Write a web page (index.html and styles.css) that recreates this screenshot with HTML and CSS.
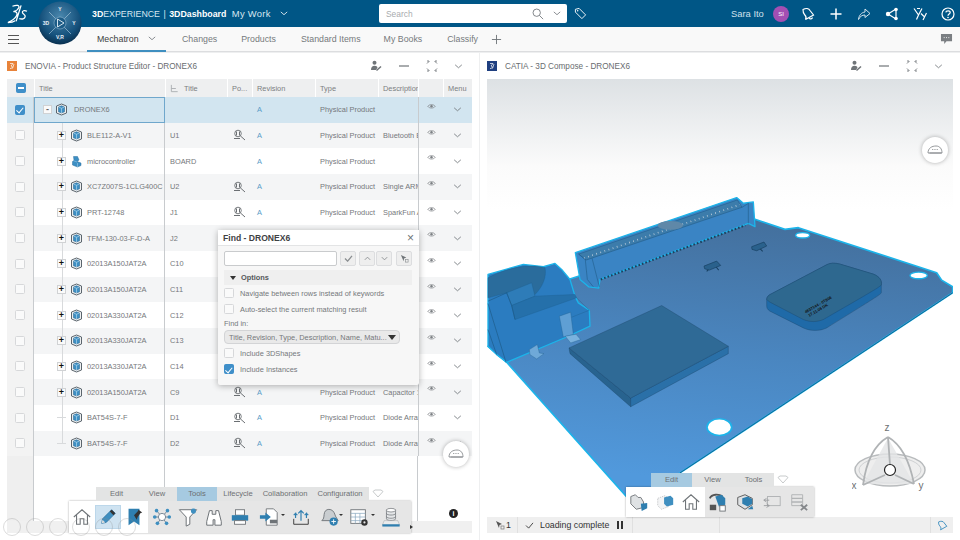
FILE: index.html
```html
<!DOCTYPE html>
<html>
<head>
    <title>3DDashboard</title>
    <link rel="stylesheet" href="styles.css">
</head>
<body>
    <svg class="defs" width="0" height="0">
        <symbol id="cube" viewBox="0 0 13 13">
            <path d="M1.500 3 6.500 1 11.500 3v7l-5 2-5-2z" fill="#eef0f1" stroke="#5b656d" stroke-width="1"/>
            <path d="M3.500 4 6.500 2.800 9.500 4v4.800L6.500 10 3.500 8.800z" fill="#3d8fc4" stroke="#1f5f8a" stroke-width=".5"/>
            <path d="M3.500 4 6.500 5.300 9.500 4M6.500 5.300V10" fill="none" stroke="#bfe0f2" stroke-width=".6"/>
        </symbol>
        <symbol id="part" viewBox="0 0 13 13">
            <path d="M3.500 1.500h4l1.500 3.500-2 1.500 4 1.500v2.500L7.500 12 2.500 10V6.500l1.500-1.200z" fill="#3d8fc4" stroke="#2a6f9e" stroke-width=".5"/>
            <path d="M3 5.500 7 7M7.500 12V8" fill="none" stroke="#a9d3ec" stroke-width=".5"/>
        </symbol>
        <symbol id="inst" viewBox="0 0 14 12">
            <circle cx="5" cy="4.500" r="3.300" fill="none" stroke="#6b6f73" stroke-width=".9"/>
            <path d="M3.500 2.500v4M6.500 2.500v4M7.500 7 12 11M1 9.500h6" fill="none" stroke="#6b6f73" stroke-width="1"/>
        </symbol>
        <symbol id="eye" viewBox="0 0 10 8">
            <path d="M.8 3.800C2.500 1.200 7.500 1.200 9.200 3.800 7.500 6.400 2.500 6.400.8 3.800z" fill="none" stroke="#7c8084" stroke-width=".8"/>
            <circle cx="5" cy="3.700" r="1.400" fill="#7c8084"/>
        </symbol>
        <symbol id="chev" viewBox="0 0 10 6">
            <path d="M1 1l4 3.500L9 1" fill="none" stroke="currentColor" stroke-width="1"/>
        </symbol>
        <symbol id="person" viewBox="0 0 12 12">
            <circle cx="4.500" cy="2.800" r="2" fill="#6f7478"/>
            <path d="M1 10c0-3 1.500-4.300 3.500-4.300S7 6.500 7.500 7.500L6 10z" fill="#6f7478"/>
            <path d="M6.500 10.500 11 6.500" stroke="#6f7478" stroke-width="1.500"/>
        </symbol>
        <symbol id="hub" viewBox="0 0 22 22">
            <path d="M11 11 5 4M11 11l6-7M11 11H3M11 11h8M11 11l-5 7M11 11l5 7" stroke="#6f8090" stroke-width="1"/>
            <circle cx="11" cy="11" r="4" fill="#fff" stroke="#6f8090" stroke-width="1"/>
            <g fill="#3f8fc0"><circle cx="5" cy="4" r="2"/><circle cx="17" cy="4" r="2"/><circle cx="3" cy="11" r="2"/><circle cx="19" cy="11" r="2"/><circle cx="6" cy="18" r="2"/><circle cx="16" cy="18" r="2"/></g>
        </symbol>
    </svg>

    <header class="topbar">
        <svg class="ds-logo" viewBox="0 0 24 22"><path d="M7 2.500C12 .5 15 1.500 14 4S10 8 8 8.500c3.500-.5 5 1.500 3.500 4.500-1.500 3-6 6-9.500 7.500 3.500 0 6-.5 8-2M16.500 1.500 11 19M23 8c-3-1.500-5.500-.5-5 1.500s3.500 2 3 4.500-3.500 3-6.500 2" fill="none" stroke="#fff" stroke-width="1.400"/></svg>
        <div class="brand"><b>3D</b>EXPERIENCE <span class="pipe">|</span> <b>3DDashboard</b> <span class="ctx">My Work</span></div>
        <svg class="brand-chev"><use href="#chev"/></svg>
        <div class="search">
            <span class="search-text">Search</span>
            <svg class="search-ico" viewBox="0 0 14 14"><circle cx="5.500" cy="5.500" r="4.300" fill="none" stroke="#6f7478"/><path d="M8.700 8.700 13 13" stroke="#6f7478"/></svg>
            <svg class="search-chev"><use href="#chev"/></svg>
        </div>
        <svg class="tag" viewBox="0 0 14 14"><path d="M1.500 2.500 5.500 1.500 12.500 8.500 8.500 12.500 1.500 5.500z" fill="none" stroke="#fff"/><circle cx="4" cy="4" r=".8" fill="#fff"/></svg>
        <div class="user">Sara Ito</div>
        <div class="avatar">SI</div>
        <svg class="act" viewBox="0 0 14 14"><path d="M2 2.500C5 1 8 1.500 9 3.500L12.500 8 4.500 12.500C5.500 11 5 9 3.500 7.500 2 6 2 4 2 2.500zM8 11c1 1.500 3 1 3.500-.5" fill="none" stroke="#fff" stroke-width="1.200"/></svg>
        <svg class="act" viewBox="0 0 14 14"><path d="M7 1.500v11M1.500 7h11" stroke="#fff" stroke-width="1.500"/></svg>
        <svg class="act" viewBox="0 0 14 14"><path d="M1.500 12.500C2 8 4.500 5.500 8 5V2l5 4.500L8 10.500V8c-3 0-5 1.500-6.500 4.500z" fill="none" stroke="#d4e4ee" stroke-width="1"/></svg>
        <svg class="act" viewBox="0 0 14 14"><path d="M3 7l8-5M3 7l8 5M11 2.500v9" stroke="#fff" stroke-width="1.200"/><circle cx="3" cy="7" r="2.200" fill="#fff"/><circle cx="11" cy="2.500" r="1.800" fill="#fff"/><circle cx="11" cy="11.500" r="1.800" fill="#fff"/></svg>
        <svg class="act" viewBox="0 0 14 14"><path d="M1 1.500 5.500 8 3.500 12.500M9 1.500 5.500 8M4 1.500h3M8 6.500l3 3M13.500 6 10 13" fill="none" stroke="#fff" stroke-width="1.200"/></svg>
        <svg class="act" viewBox="0 0 14 14"><circle cx="7" cy="7" r="6" fill="none" stroke="#fff" stroke-width="1.200"/><path d="M4.800 5.400C5 3.300 9.200 3.300 9.200 5.400 9.200 7 7 7 7 8.700" fill="none" stroke="#fff" stroke-width="1.200"/><circle cx="7" cy="10.500" r=".8" fill="#fff"/></svg>
    </header>

    <div class="compass">
        <svg viewBox="0 0 44 44" width="44" height="44">
            <defs><radialGradient id="cg" cx=".5" cy=".35" r=".65"><stop offset="0" stop-color="#4a87ad"/><stop offset=".7" stop-color="#15517c"/><stop offset="1" stop-color="#0a3150"/></radialGradient></defs>
            <circle cx="22" cy="22" r="21.500" fill="url(#cg)"/>
            <path d="M11 11l7 7M33 11l-7 7M11 33l7-7M33 33l-7-7" stroke="#9fc0d6" stroke-width=".7"/>
            <circle cx="22" cy="22" r="6" fill="#1c5c87" stroke="#9fc0d6" stroke-width=".5"/>
            <path d="M19.500 18 26 22l-6.500 4z" fill="none" stroke="#e6f0f6" stroke-width=".9"/>
            <text x="22" y="10" class="cp-t">Y</text>
            <text x="8" y="24" class="cp-t">3D</text>
            <text x="36" y="24" class="cp-t">Y</text>
            <text x="22" y="37.500" class="cp-t">V,R</text>
        </svg>
    </div>

    <nav class="tabbar">
        <div class="burger"><i></i><i></i><i></i></div>
        <div class="tab on">Mechatron<svg class="tab-chev"><use href="#chev"/></svg></div>
        <div class="tab t-changes">Changes</div>
        <div class="tab t-products">Products</div>
        <div class="tab t-standard">Standard Items</div>
        <div class="tab t-books">My Books</div>
        <div class="tab t-classify">Classify</div>
        <svg class="tab-plus" viewBox="0 0 12 12"><path d="M6 1v10M1 6h10" stroke="#6f7478" stroke-width="1"/></svg>
        <svg class="chat" viewBox="0 0 14 13"><path d="M1 1h12v8H7l-2.500 3V9H1z" fill="#7b7f83"/><path d="M4 5h1M6.500 5h1M9 5h1" stroke="#fff"/></svg>
    </nav>

    <main class="board">
        <section class="panel left">
            <div class="panel-head">
                <svg class="app-ico" viewBox="0 0 10 10"><rect width="10" height="10" fill="#e8833a"/><path d="M3 2.500h3L4 5c2 0 2 2.500-1 2.500M7 3 5.500 7.500" fill="none" stroke="#fff" stroke-width=".7"/></svg>
                <span class="panel-title">ENOVIA - Product Structure Editor - DRONEX6</span>
                <div class="panel-acts">
                    <svg class="pa"><use href="#person"/></svg>
                    <svg class="pa" viewBox="0 0 12 12"><path d="M1 6h10" stroke="#6f7478" stroke-width="1.200"/></svg>
                    <svg class="pa" viewBox="0 0 12 12"><path d="M1 3.500 3.500 1M11 3.500 8.500 1M1 8.500 3.500 11M11 8.500 8.500 11M1 1h2M9 1h2M1 11h2M9 11h2" fill="none" stroke="#6f7478" stroke-width=".9"/></svg>
                    <svg class="pa-chev"><use href="#chev"/></svg>
                </div>
            </div>
            <div class="grid">
                <div class="row head">
                    <div class="cell chk"><span class="box minus"></span></div>
                    <div class="cell">Title</div>
                    <div class="cell title2"><svg class="tree-ico" viewBox="0 0 10 10"><path d="M1.500 1v7.500h7M1.500 5h5" fill="none" stroke="#a9adb0"/></svg>Title</div>
                    <div class="cell">Po...</div>
                    <div class="cell">Revision</div>
                    <div class="cell">Type</div>
                    <div class="cell">Description</div>
                    <div class="cell"></div>
                    <div class="cell">Menu</div>
                </div>
                <div class="row sel">
                    <div class="cell chk"><span class="box on"></span></div>
                    <div class="cell name root"><span class="exp">-</span><svg class="ico"><use href="#cube"/></svg>DRONEX6</div>
                    <div class="cell"></div>
                    <div class="cell"></div>
                    <div class="cell rev">A</div>
                    <div class="cell">Physical Product</div>
                    <div class="cell"></div>
                    <div class="cell eye"><svg><use href="#eye"/></svg></div>
                    <div class="cell menu"><svg><use href="#chev"/></svg></div>
                </div>
                <div class="row">
                    <div class="cell chk"><span class="box"></span></div>
                    <div class="cell name"><span class="exp">+</span><svg class="ico"><use href="#cube"/></svg>BLE112-A-V1</div>
                    <div class="cell">U1</div>
                    <div class="cell po"><svg><use href="#inst"/></svg></div>
                    <div class="cell rev">A</div>
                    <div class="cell">Physical Product</div>
                    <div class="cell">Bluetooth E</div>
                    <div class="cell eye"><svg><use href="#eye"/></svg></div>
                    <div class="cell menu"><svg><use href="#chev"/></svg></div>
                </div>
                <div class="row">
                    <div class="cell chk"><span class="box"></span></div>
                    <div class="cell name"><span class="exp">+</span><svg class="ico"><use href="#part"/></svg>microcontroller</div>
                    <div class="cell">BOARD</div>
                    <div class="cell"></div>
                    <div class="cell rev">A</div>
                    <div class="cell">Physical Product</div>
                    <div class="cell"></div>
                    <div class="cell eye"><svg><use href="#eye"/></svg></div>
                    <div class="cell menu"><svg><use href="#chev"/></svg></div>
                </div>
                <div class="row">
                    <div class="cell chk"><span class="box"></span></div>
                    <div class="cell name"><span class="exp">+</span><svg class="ico"><use href="#cube"/></svg>XC7Z007S-1CLG400C</div>
                    <div class="cell">U2</div>
                    <div class="cell po"><svg><use href="#inst"/></svg></div>
                    <div class="cell rev">A</div>
                    <div class="cell">Physical Product</div>
                    <div class="cell">Single ARM</div>
                    <div class="cell eye"><svg><use href="#eye"/></svg></div>
                    <div class="cell menu"><svg><use href="#chev"/></svg></div>
                </div>
                <div class="row">
                    <div class="cell chk"><span class="box"></span></div>
                    <div class="cell name"><span class="exp">+</span><svg class="ico"><use href="#cube"/></svg>PRT-12748</div>
                    <div class="cell">J1</div>
                    <div class="cell po"><svg><use href="#inst"/></svg></div>
                    <div class="cell rev">A</div>
                    <div class="cell">Physical Product</div>
                    <div class="cell">SparkFun A</div>
                    <div class="cell eye"><svg><use href="#eye"/></svg></div>
                    <div class="cell menu"><svg><use href="#chev"/></svg></div>
                </div>
                <div class="row">
                    <div class="cell chk"><span class="box"></span></div>
                    <div class="cell name"><span class="exp">+</span><svg class="ico"><use href="#cube"/></svg>TFM-130-03-F-D-A</div>
                    <div class="cell">J2</div>
                    <div class="cell"></div>
                    <div class="cell"></div>
                    <div class="cell"></div>
                    <div class="cell"></div>
                    <div class="cell eye"><svg><use href="#eye"/></svg></div>
                    <div class="cell menu"><svg><use href="#chev"/></svg></div>
                </div>
                <div class="row">
                    <div class="cell chk"><span class="box"></span></div>
                    <div class="cell name"><span class="exp">+</span><svg class="ico"><use href="#cube"/></svg>02013A150JAT2A</div>
                    <div class="cell">C10</div>
                    <div class="cell"></div>
                    <div class="cell"></div>
                    <div class="cell"></div>
                    <div class="cell"></div>
                    <div class="cell eye"><svg><use href="#eye"/></svg></div>
                    <div class="cell menu"><svg><use href="#chev"/></svg></div>
                </div>
                <div class="row">
                    <div class="cell chk"><span class="box"></span></div>
                    <div class="cell name"><span class="exp">+</span><svg class="ico"><use href="#cube"/></svg>02013A150JAT2A</div>
                    <div class="cell">C11</div>
                    <div class="cell"></div>
                    <div class="cell"></div>
                    <div class="cell"></div>
                    <div class="cell"></div>
                    <div class="cell eye"><svg><use href="#eye"/></svg></div>
                    <div class="cell menu"><svg><use href="#chev"/></svg></div>
                </div>
                <div class="row">
                    <div class="cell chk"><span class="box"></span></div>
                    <div class="cell name"><span class="exp">+</span><svg class="ico"><use href="#cube"/></svg>02013A330JAT2A</div>
                    <div class="cell">C12</div>
                    <div class="cell"></div>
                    <div class="cell"></div>
                    <div class="cell"></div>
                    <div class="cell"></div>
                    <div class="cell eye"><svg><use href="#eye"/></svg></div>
                    <div class="cell menu"><svg><use href="#chev"/></svg></div>
                </div>
                <div class="row">
                    <div class="cell chk"><span class="box"></span></div>
                    <div class="cell name"><span class="exp">+</span><svg class="ico"><use href="#cube"/></svg>02013A330JAT2A</div>
                    <div class="cell">C13</div>
                    <div class="cell"></div>
                    <div class="cell"></div>
                    <div class="cell"></div>
                    <div class="cell"></div>
                    <div class="cell eye"><svg><use href="#eye"/></svg></div>
                    <div class="cell menu"><svg><use href="#chev"/></svg></div>
                </div>
                <div class="row">
                    <div class="cell chk"><span class="box"></span></div>
                    <div class="cell name"><span class="exp">+</span><svg class="ico"><use href="#cube"/></svg>02013A330JAT2A</div>
                    <div class="cell">C14</div>
                    <div class="cell"></div>
                    <div class="cell"></div>
                    <div class="cell"></div>
                    <div class="cell"></div>
                    <div class="cell eye"><svg><use href="#eye"/></svg></div>
                    <div class="cell menu"><svg><use href="#chev"/></svg></div>
                </div>
                <div class="row">
                    <div class="cell chk"><span class="box"></span></div>
                    <div class="cell name"><span class="exp">+</span><svg class="ico"><use href="#cube"/></svg>02013A150JAT2A</div>
                    <div class="cell">C9</div>
                    <div class="cell po"><svg><use href="#inst"/></svg></div>
                    <div class="cell rev">A</div>
                    <div class="cell">Physical Product</div>
                    <div class="cell">Capacitor 1</div>
                    <div class="cell eye"><svg><use href="#eye"/></svg></div>
                    <div class="cell menu"><svg><use href="#chev"/></svg></div>
                </div>
                <div class="row">
                    <div class="cell chk"><span class="box"></span></div>
                    <div class="cell name leaf"><span class="exp none"></span><svg class="ico"><use href="#cube"/></svg>BAT54S-7-F</div>
                    <div class="cell">D1</div>
                    <div class="cell po"><svg><use href="#inst"/></svg></div>
                    <div class="cell rev">A</div>
                    <div class="cell">Physical Product</div>
                    <div class="cell">Diode Array</div>
                    <div class="cell eye"><svg><use href="#eye"/></svg></div>
                    <div class="cell menu"><svg><use href="#chev"/></svg></div>
                </div>
                <div class="row">
                    <div class="cell chk"><span class="box"></span></div>
                    <div class="cell name leaf last"><span class="exp none"></span><svg class="ico"><use href="#cube"/></svg>BAT54S-7-F</div>
                    <div class="cell">D2</div>
                    <div class="cell po"><svg><use href="#inst"/></svg></div>
                    <div class="cell rev">A</div>
                    <div class="cell">Physical Product</div>
                    <div class="cell">Diode Array</div>
                    <div class="cell eye"><svg><use href="#eye"/></svg></div>
                    <div class="cell menu"><svg><use href="#chev"/></svg></div>
                </div>
                <div class="row filler">
                    <div class="cell chk"></div>
                    <div class="cell"></div>
                    <div class="cell span-mid"></div>
                    <div class="cell"></div>
                </div>
                <div class="grid-foot"></div>
            </div>

            <div class="badge b-left"><svg viewBox="0 0 16 10"><path d="M1 8C1 3 5 1 9 1s6 3 6 7z" fill="#fff" stroke="#7b7f83" stroke-width=".8"/><path d="M2.500 8h12" stroke="#7b7f83" stroke-width=".8"/><path d="M5 4.500h6" stroke="#7b7f83" stroke-width=".7" stroke-dasharray="1 .7"/></svg></div>

            <div class="find">
                <div class="find-head"><b>Find - DRONEX6</b><span class="x">×</span></div>
                <div class="find-body">
                    <div class="find-top">
                        <span class="find-input"></span>
                        <span class="fbtn"><svg viewBox="0 0 10 8"><path d="M1 4l3 3 5-6" fill="none" stroke="#8a8e91" stroke-width="1.500"/></svg></span>
                        <span class="fbtn small"><svg viewBox="0 0 10 6"><path d="M2 4.500 5 1.500l3 3" fill="none" stroke="#8a8e91"/></svg></span>
                        <span class="fbtn small"><svg viewBox="0 0 10 6"><path d="M2 1.500 5 4.500l3-3" fill="none" stroke="#8a8e91"/></svg></span>
                        <span class="fbtn last"><svg viewBox="0 0 10 10"><path d="M1 1l6 3-2.500 1L4 8z" fill="#6f7478"/><rect x="6" y="6" width="3" height="3" fill="none" stroke="#8a8e91" stroke-width=".7"/></svg></span>
                    </div>
                    <div class="find-opts"><span class="tri"></span>Options</div>
                    <label class="opt"><span class="box"></span>Navigate between rows instead of keywords</label>
                    <label class="opt"><span class="box"></span>Auto-select the current matching result</label>
                    <div class="find-in">Find in:</div>
                    <div class="find-sel"><span>Title, Revision, Type, Description, Name, Matu...</span><span class="tri"></span></div>
                    <label class="opt tight"><span class="box"></span>Include 3DShapes</label>
                    <label class="opt"><span class="box on"></span>Include Instances</label>
                </div>
            </div>

            <div class="info">i</div>

            <div class="actionbar ab-left">
                <div class="ab-tabs">
                    <div class="ab-tab w-edit">Edit</div>
                    <div class="ab-tab w-view">View</div>
                    <div class="ab-tab w-tools on">Tools</div>
                    <div class="ab-tab w-life">Lifecycle</div>
                    <div class="ab-tab w-collab">Collaboration</div>
                    <div class="ab-tab w-conf">Configuration</div>
                    <svg class="ab-more" viewBox="0 0 12 9"><path d="M1 2.500 3 1h6l2 1.500L6 8z" fill="#fff" stroke="#b9bcbe" stroke-width=".8"/></svg>
                </div>
                <div class="ab-tools">
                    <div class="ab-pin">
                        <span class="slot w26"><svg viewBox="0 0 22 22"><path d="M2 11 11 3l9 8M5 9v10h4v-6h4v6h4V9" fill="#fff" stroke="#6f7478" stroke-width="1.200"/></svg></span>
                        <span class="slot w26 active"><svg viewBox="0 0 22 22"><path d="M4 18l1-5L15 3l4 4L9 17z" fill="#3f8fc0" stroke="#2a6f9e" stroke-width=".8"/><path d="M15 3l4 4-2 2-4-4z" fill="#333"/><path d="M4 18l1-4 3 3z" fill="#ddd"/></svg></span>
                        <span class="slot w26"><svg viewBox="0 0 22 22"><path d="M5 2h12v18l-6-4-6 4z" fill="#2f7fb0"/><path d="M11 9l4-4 1-2 4 3-2 1-3 4-1 3z" fill="#333"/></svg></span>
                    </div>
                    <div class="ab-rest">
                        <span class="slot w26"><svg><use href="#hub"/></svg></span>
                        <span class="slot w26"><svg viewBox="0 0 22 22"><path d="M1.500 3h19L13 11v8l-4 2V11z" fill="#fff" stroke="#6f7478" stroke-width="1.100"/><circle cx="17" cy="4.500" r="2.800" fill="#3f8fc0"/></svg></span>
                        <span class="slot w26"><svg viewBox="0 0 22 22"><path d="M6 4h3v4h4V4h3l3 12v4h-7v-6h-2v6H3v-4z" fill="#fff" stroke="#6f7478" stroke-width="1.100"/></svg></span>
                        <span class="slot w26"><svg viewBox="0 0 22 22"><rect x="6" y="3" width="10" height="6" fill="#fff" stroke="#6f7478"/><rect x="2" y="9" width="18" height="6" fill="#2f7fb0"/><rect x="5" y="15" width="12" height="4" fill="#fff" stroke="#6f7478"/></svg></span>
                        <span class="slot w32"><svg viewBox="0 0 22 22"><path d="M8 2h8l4 4v14H8z" fill="#fff" stroke="#6f7478"/><path d="M1 9h6V6l6 5-6 5v-3H1z" fill="#2f7fb0"/><rect x="12" y="14" width="8" height="4" fill="#6f7478"/></svg><i class="drop"></i></span>
                        <span class="slot w32"><svg viewBox="0 0 22 22"><path d="M3 13v6h16v-6" fill="none" stroke="#333" stroke-width="1"/><path d="M11 15V4M8 7l3-3 3 3M5 12V7L3 9M5 7l2 2M17 12V7l-2 2M17 7l2 2" fill="none" stroke="#2f7fb0" stroke-width="1.300"/></svg></span>
                        <span class="slot w26"><svg viewBox="0 0 22 22"><path d="M2 15c3-2 2-6 3-9s4-4 7-3 4 4 5 7l3 5z" fill="#c9cdd0" stroke="#6f7478"/><circle cx="15" cy="16" r="4.500" fill="#2f7fb0"/><path d="M15 13.500v5M12.500 16h5" stroke="#fff"/></svg><i class="drop"></i></span>
                        <span class="slot w32"><svg viewBox="0 0 22 22"><rect x="2" y="3" width="16" height="15" fill="#fff" stroke="#6f7478"/><path d="M2 7h16M7 7v11M12 7v11M2 11h16M2 15h16" stroke="#8aa8bf" stroke-width=".8"/><circle cx="17" cy="17" r="3.500" fill="#333"/><circle cx="17" cy="17" r="1.200" fill="#e6e6e6"/></svg><i class="drop"></i></span>
                        <span class="slot w32"><svg viewBox="0 0 22 22"><path d="M6 3v10c0 2.500 10 2.500 10 0V3z" fill="#e4e6e8" stroke="#6f7478" stroke-width=".8"/><ellipse cx="11" cy="3.500" rx="5" ry="2" fill="#fff" stroke="#6f7478" stroke-width=".8"/><path d="M6 7c0 2.500 10 2.500 10 0M6 10.500c0 2.500 10 2.500 10 0" fill="none" stroke="#6f7478" stroke-width=".8"/><path d="M1.500 20l2-5h15l2 5z" fill="#e9ebec" stroke="#9da1a4" stroke-width=".5"/><rect x="1.500" y="19" width="19" height="2.500" fill="#2f7fb0"/></svg></span>
                    </div>
                </div>
            </div>

            <div class="ghost-nav">
                <span></span><span></span><span></span><span></span><span></span><span></span>
            </div>
        </section>

        <section class="panel right">
            <div class="panel-head">
                <svg class="app-ico" viewBox="0 0 10 10"><rect width="10" height="10" fill="#1f3f80"/><path d="M3 2.500h3L4 5c2 0 2 2.500-1 2.500M7 3 5.500 7.500" fill="none" stroke="#fff" stroke-width=".7"/></svg>
                <span class="panel-title">CATIA - 3D Compose - DRONEX6</span>
                <div class="panel-acts">
                    <svg class="pa"><use href="#person"/></svg>
                    <svg class="pa" viewBox="0 0 12 12"><path d="M1 6h10" stroke="#6f7478" stroke-width="1.200"/></svg>
                    <svg class="pa" viewBox="0 0 12 12"><path d="M1 3.500 3.500 1M11 3.500 8.500 1M1 8.500 3.500 11M11 8.500 8.500 11M1 1h2M9 1h2M1 11h2M9 11h2" fill="none" stroke="#6f7478" stroke-width=".9"/></svg>
                    <svg class="pa-chev"><use href="#chev"/></svg>
                </div>
            </div>
            <div class="viewer">
                <svg class="scene" viewBox="21 -300 1398 1311" preserveAspectRatio="none">
                    <defs>
                        <linearGradient id="bg" x1="0" y1="0" x2="0" y2="1"><stop offset="0" stop-color="#dde1e4"/><stop offset=".2" stop-color="#fbfbfb"/><stop offset=".3" stop-color="#fff"/></linearGradient>
                        <linearGradient id="pcb" gradientUnits="userSpaceOnUse" x1="700" y1="130" x2="620" y2="900"><stop offset="0" stop-color="#44719f"/><stop offset=".5" stop-color="#4a86c0"/><stop offset="1" stop-color="#5199dc"/></linearGradient>
                    </defs>
                    <rect x="21" y="-300" width="1398" height="1311" fill="url(#bg)"/>
                    <path d="M24 500 265 300 825 120 915 150 955 145 1370 280 1385 302 1418 322 1418 340 600 879 459 972 80 548z" fill="url(#pcb)" stroke="#1cb4ea" stroke-width="5" stroke-linejoin="round"/>
                    <path d="M1418 340 600 879" stroke="#123f66" stroke-width="2"/>
                    <ellipse cx="718" cy="742" rx="37" ry="25" fill="#fff" stroke="#1cb4ea" stroke-width="5"/>
                    <ellipse cx="968" cy="168" rx="21" ry="8" fill="#fff" stroke="#1cb4ea" stroke-width="4"/>
                    <ellipse cx="1316" cy="288" rx="26" ry="10" fill="#fff" stroke="#1cb4ea" stroke-width="4"/>

                    <!-- connector -->
                    <path d="M286 220 770 55 790 72 820 68 825 142 805 132 360 300 356 326 326 322 300 300z" fill="#3a84c4" stroke="#1cb4ea" stroke-width="4" stroke-linejoin="round"/>
                    <path d="M296 224 772 62 786 84 318 242z" fill="#3c7cab" stroke="#1e5680" stroke-width="1.500"/>
                    <path d="M312 236 780 76" stroke="#cfd9e2" stroke-width="5" stroke-dasharray="2 11"/>
                    <path d="M316 242 322 300 340 322M336 236 358 322M296 224 318 242" fill="none" stroke="#22608f" stroke-width="2"/>
                    <path d="M362 300 796 138" stroke="#1d3f5c" stroke-width="6" stroke-dasharray="5 6"/>
                    <path d="M805 132V72M786 84 806 72" fill="none" stroke="#22608f" stroke-width="2"/>
                    <ellipse cx="571" cy="138" rx="38" ry="13" fill="#5f88a8"/>

                    <!-- small diodes -->
                    <path d="M686 270 680 276M708 262 716 272M840 208 848 216" stroke="#173f60" stroke-width="3"/>
                    <path d="M672 260 710 245 722 258 688 272 674 268z" fill="#2a618c" stroke="#173f60" stroke-width="2"/>
                    <path d="M815 202 852 188 860 200 830 214 816 210z" fill="#2a618c" stroke="#173f60" stroke-width="2"/>

                    <!-- qfn chip -->
                    <path d="M267 505 452 655 452 681 270 522z" fill="#28638f" stroke="#173f60"/>
                    <path d="M452 655 745 500 745 522 452 681z" fill="#2a70a8" stroke="#173f60"/>
                    <path d="M267 505 545 378 745 500 452 655z" fill="#2f6a96" stroke="#173f60"/>

                    <!-- rounded module -->
                    <path d="M860 360C860 352 866 346 876 342L1040 256C1050 250 1065 250 1080 254L1180 284C1200 292 1206 304 1204 316V340C1200 346 1190 352 1040 445 1020 455 990 455 970 445L870 395C862 390 860 385 860 378z" fill="#1f6aa8" stroke="#173f60"/>
                    <path d="M860 360C860 352 866 346 876 342L1040 256C1050 250 1065 250 1080 254L1180 284C1200 292 1206 304 1204 316 1200 322 1190 328 1030 420 1010 428 990 428 970 420L870 368z" fill="#2e688f" stroke="#173f60"/>
                    <g class="chip-text" transform="rotate(-30 985 402)"><text x="978" y="398">4837144 - 0T806</text><text x="982" y="412">17.11.06 DK</text></g>

                    <!-- usb cradle -->
                    <path d="M24 285 130 255 190 262 225 252 245 270 270 300 285 350 295 370 328 392 330 440 265 470 80 548 50 525 24 500z" fill="#2b7cc0" stroke="#1cb4ea" stroke-width="4" stroke-linejoin="round"/>
                    <path d="M24 295C70 270 140 250 195 265 200 290 190 320 165 345L80 340 24 355z" fill="#2a6c9c" stroke="#1c5b88"/>
                    <path d="M80 340 155 310 165 350 95 378z" fill="#2e7cb8" stroke="#1c5b88"/>
                    <path d="M95 378 165 350 285 345 290 355 105 420z" fill="#2570aa" stroke="#1c5b88"/>
                    <path d="M24 365 80 340 95 378 105 420M24 372 78 548M24 450 50 525" fill="none" stroke="#1c5b88" stroke-width="2"/>
                    <path d="M290 355 328 392 270 415" fill="none" stroke="#1c5b88"/>
                    <path d="M238 410 272 398 280 465 250 472z" fill="#5f9fd4" stroke="#1c5b88"/>
                    <path d="M256 470 288 464 302 480 272 490z" fill="#7ab2de" stroke="#1c5b88"/>
                    <path d="M148 510 172 495 178 520 192 522 170 538 150 525z" fill="#6fa9d8" stroke="#1c5b88"/>
                </svg>
                <div class="badge b-right"><svg viewBox="0 0 16 10"><path d="M1 8C1 3 5 1 9 1s6 3 6 7z" fill="#fff" stroke="#7b7f83" stroke-width=".8"/><path d="M2.500 8h12" stroke="#7b7f83" stroke-width=".8"/><path d="M5 4.500h6" stroke="#7b7f83" stroke-width=".7" stroke-dasharray="1 .7"/></svg></div>
                <svg class="axes" viewBox="0 0 80 70">
                    <ellipse cx="38" cy="45" rx="35" ry="16" fill="#eee" stroke="#b8bbbd" stroke-width="1.500"/>
                    <ellipse cx="38" cy="45" rx="31" ry="13" fill="none" stroke="#cfd1d3"/>
                    <path d="M36 13 62 59H11z" fill="#e3e5e6" opacity=".8"/>
                    <path d="M36 12C22 20 14 38 11 60M36 12C50 20 58 38 62 59M36 12 38 40M33 50 11 60M43 50 62 59" fill="none" stroke="#b0b3b5" stroke-width="1.800"/>
                    <circle cx="38" cy="45" r="5.500" fill="#fff" stroke="#222" stroke-width="1.200"/>
                    <text x="35" y="6" class="ax">z</text>
                    <text x="2" y="64" class="ax">x</text>
                    <text x="69" y="64" class="ax">y</text>
                </svg>
                <div class="actionbar ab-right">
                    <div class="ab-tabs">
                        <div class="ab-tab w-e2 on">Edit</div>
                        <div class="ab-tab w-v2">View</div>
                        <div class="ab-tab w-t2">Tools</div>
                        <svg class="ab-more" viewBox="0 0 12 9"><path d="M1 2.500 3 1h6l2 1.500L6 8z" fill="#fff" stroke="#b9bcbe" stroke-width=".8"/></svg>
                    </div>
                    <div class="ab-tools">
                        <div class="ab-pin pin2">
                            <span class="slot w26"><svg viewBox="0 0 22 22"><path d="M2 5 7 3l3 3 3 0 3 5v6l-8 2-6-6z" fill="#dfe2e4" stroke="#6f7478"/><path d="M13 13l7-1v6l-6 3z" fill="#2f7fb0"/></svg></span>
                            <span class="slot w26"><svg viewBox="0 0 22 22"><path d="M3 7l8-3 4 3v9l-8 3-4-4z" fill="#f3f4f5" stroke="#c4c7c9" stroke-dasharray="1.500 1"/><path d="M10 6l7-2 3 3v7l-7 2-3-3z" fill="#3f8fc0"/></svg></span>
                            <span class="slot w26"><svg viewBox="0 0 22 22"><path d="M2 11 11 3l9 8M5 9v10h4v-6h4v6h4V9" fill="#fff" stroke="#6f7478" stroke-width="1.200"/></svg></span>
                        </div>
                        <div class="ab-rest rest2">
                            <span class="slot w26"><svg viewBox="0 0 22 22"><path d="M2 7C4 2 12 2 16 5" fill="none" stroke="#555" stroke-width="2"/><path d="M8 5l7-2 4 4v7l-7 2z" fill="#2f7fb0"/><rect x="2" y="14" width="7" height="6" fill="#555"/><rect x="13" y="15" width="6" height="6" fill="#fff" stroke="#6f7478"/></svg></span>
                            <span class="slot w26"><svg viewBox="0 0 22 22"><path d="M3 6l8-3 8 4v7l-8 5-8-5z" fill="#dfe2e4" stroke="#555"/><path d="M8 7l6-2 5 3v5l-5 3-6-3z" fill="#2f7fb0"/><path d="M19 15l-5 4h6z" fill="#2f7fb0"/></svg></span>
                            <span class="slot w26"><svg viewBox="0 0 22 22"><rect x="6" y="5" width="14" height="10" fill="none" stroke="#aeb1b3"/><path d="M2 9h6M5 7l-3 2 3 2M2 15h6M5 13l3 2-3 2" fill="none" stroke="#9a9da0"/></svg></span>
                            <span class="slot w26"><svg viewBox="0 0 22 22"><path d="M3 3h12v4H3zM3 7h12v4H3zM3 11h12v4H3z" fill="none" stroke="#aeb1b3"/><path d="M13 14l7 6M20 14l-7 6" stroke="#85888b" stroke-width="2"/></svg></span>
                        </div>
                    </div>
                </div>
            </div>
            <div class="status">
                <div class="st st-sel"><svg viewBox="0 0 10 10"><path d="M1 1l6 3-2.500 1L4 8z" fill="#555"/><rect x="6" y="6" width="3" height="3" fill="none" stroke="#777" stroke-width=".7"/></svg>1</div>
                <div class="st st-load"><svg viewBox="0 0 10 8"><path d="M1 4l3 3 5-6" fill="none" stroke="#333" stroke-width="1"/></svg><span>Loading complete</span><i class="pause"></i></div>
                <div class="st st-mid"></div>
                <div class="st st-end"></div>
                <div class="st st-bell"><svg viewBox="0 0 14 14"><path d="M2 2.500C5 1 8 1.500 9 3.500L12.500 8 4.500 12.500C5.500 11 5 9 3.500 7.500 2 6 2 4 2 2.500z" fill="none" stroke="#3f8fc0" stroke-width="1.200"/></svg></div>
            </div>
        </section>
    </main>
</body>
</html>
```

FILE: styles.css
```css
* {
    box-sizing: border-box;
}

html, body {
    margin: 0;
    padding: 0;
    height: 100%;
}

body {
    width: 960px;
    height: 540px;
    overflow: hidden;
    display: flex;
    flex-direction: column;
    position: relative;
    background: #f1f2f3;
    font-family: "Liberation Sans", Arial, sans-serif;
    font-size: 7.4px;
    color: #75787b;
}

.defs {
    position: absolute;
}

svg {
    display: block;
}

/* top bar */
.topbar {
    height: 27px;
    flex: none;
    background: #005686;
    display: flex;
    align-items: center;
    color: #fff;
}

.ds-logo {
    width: 22px;
    height: 20px;
    margin-left: 6px;
}

.brand {
    margin-left: 64px;
    font-size: 8.8px;
    color: #d7e6f0;
    white-space: nowrap;
    width: 183px;
}

.brand b {
    color: #fff;
}

.pipe {
    margin: 0 1px;
}

.ctx {
    margin-left: 3px;
    font-size: 9.4px;
    letter-spacing: .3px;
}

.brand-chev {
    width: 8px;
    height: 5px;
    color: #fff;
    margin-left: 5px;
}

.search {
    width: 188px;
    height: 19px;
    margin-left: 91px;
    background: #fff;
    border-radius: 2px;
    display: flex;
    align-items: center;
    padding: 0 6px 0 7px;
}

.search-text {
    flex: 1;
    font-size: 8.4px;
    color: #a8abae;
}

.search-ico {
    width: 12px;
    height: 12px;
}

.search-chev {
    width: 8px;
    height: 5px;
    margin-left: 9px;
    color: #6f7478;
}

.tag {
    width: 13px;
    height: 13px;
    margin-left: 7px;
}

.user {
    margin-left: 144px;
    font-size: 9.4px;
    width: 42px;
    color: #cfe0eb;
}

.avatar {
    width: 16px;
    height: 16px;
    border-radius: 50%;
    background: #a34fb3;
    font-size: 6px;
    color: #fff;
    text-align: center;
    line-height: 16px;
}

.act {
    width: 14px;
    height: 14px;
    margin-left: 14px;
}

.avatar + .act {
    margin-left: 12px;
}

/* compass */
.compass {
    position: absolute;
    left: 38px;
    top: 1px;
    width: 44px;
    height: 44px;
    z-index: 5;
}

.cp-t {
    font-size: 5px;
    font-weight: bold;
    fill: #e6f0f6;
    text-anchor: middle;
}

/* tabs */
.tabbar {
    height: 25px;
    flex: none;
    background: #f9f9f9;
    border-bottom: 1px solid #dcdddf;
    display: flex;
    align-items: center;
    font-size: 8.8px;
    color: #76797c;
}

.burger {
    margin-left: 8px;
    width: 11px;
}

.burger i {
    display: block;
    height: 1px;
    background: #555;
    margin: 3px 0;
}

.tab {
    white-space: nowrap;
}

.tab.on {
    color: #3c3f42;
    margin-left: 68px;
    height: 24px;
    width: 79px;
    padding-left: 10px;
    line-height: 24px;
    border-bottom: 1px solid #3f8fc0;
    display: flex;
    align-items: center;
    box-shadow: 0 1px 0 #3f8fc0;
}

.tab-chev {
    width: 8px;
    height: 5px;
    margin-left: 9px;
    color: #6f7478;
}

.t-changes {
    margin-left: 16px;
}

.t-products {
    margin-left: 24px;
}

.t-standard {
    margin-left: 25px;
}

.t-books {
    margin-left: 23px;
}

.t-classify {
    margin-left: 25px;
}

.tab-plus {
    width: 11px;
    height: 11px;
    margin-left: 13px;
}

.chat {
    width: 13px;
    height: 12px;
    margin-left: auto;
    margin-right: 7px;
}

/* panels */
.board {
    flex: 1;
    display: flex;
    gap: 1px;
    min-height: 0;
    background: #eeeff0;
    padding-top: 1px;
}

.panel {
    background: #fff;
    position: relative;
    display: flex;
    flex-direction: column;
    padding: 0 7px 7px;
}

.left {
    width: 479px;
}

.right {
    width: 480px;
}

.panel-head {
    height: 26px;
    flex: none;
    display: flex;
    align-items: center;
}

.app-ico {
    width: 10px;
    height: 10px;
    margin-right: 8px;
}

.panel-title {
    font-size: 8.2px;
    color: #696c6f;
}

.panel-acts {
    margin-left: auto;
    display: flex;
    align-items: center;
    gap: 16px;
    margin-right: 9px;
}

.right .panel-acts {
    margin-right: 10px;
}

.pa {
    width: 12px;
    height: 12px;
}

.pa-chev {
    width: 9px;
    height: 5px;
    color: #6f7478;
}

/* table */
.grid {
    flex: 1;
    display: flex;
    flex-direction: column;
    min-height: 0;
}

.row {
    display: grid;
    grid-template-columns: 27px 131px 62px 25px 63px 63px 40px 25px 29px;
    height: 25.66px;
    flex: none;
    background: #fff;
}

.row:nth-child(odd) {
    background: #f4f5f6;
}

.row.head {
    height: 18px;
    background: #eeeff0;
    color: #7b7e81;
}

.row.head .cell {
    border-left: 1px solid #fff;
    padding-left: 4px;
    border-right: 0;
}

.row.head .chk {
    padding-left: 0;
    border-left: 0;
}

.row.sel {
    background: #d2e5f0;
}

.cell {
    display: flex;
    align-items: center;
    padding-left: 5px;
    white-space: nowrap;
    overflow: hidden;
    min-width: 0;
}

.chk {
    justify-content: center;
    padding-left: 0;
    border-right: 1px solid #c8cbce;
    background: #f3f3f3;
}

.row.sel .chk {
    background: #d2e5f0;
}

.row.head .chk {
    background: #eeeff0;
}

.box {
    width: 10px;
    height: 10px;
    border: 1px solid #d7d8da;
    border-radius: 1.5px;
    background: #fafafa;
    display: block;
    flex: none;
    position: relative;
}

.box.on, .box.minus {
    background: #3f8fc9;
    border-color: #3f8fc9;
}

.box.on::after {
    content: "";
    position: absolute;
    left: 2px;
    top: .5px;
    width: 3px;
    height: 5.5px;
    border: solid #fff;
    border-width: 0 1.5px 1.5px 0;
    transform: rotate(40deg);
}

.box.minus::after {
    content: "";
    position: absolute;
    left: 1px;
    right: 1px;
    top: 3px;
    height: 2px;
    background: #fff;
}

.name {
    padding-left: 23px;
    background: linear-gradient(#d8dadc, #d8dadc) 27.5px 0 / 1px 100% no-repeat;
    border-right: 1px solid #c8cbce;
}

.name.root {
    padding-left: 8px;
    border: 1px solid #6fa7cc;
    background: #d2e5f0;
}

.name.last {
    background: linear-gradient(#d8dadc, #d8dadc) 27.5px 0 / 1px 50% no-repeat;
}

.exp {
    width: 9px;
    height: 9px;
    background: #fafafa;
    border: 1px solid #d0d2d4;
    color: #111;
    font-size: 9px;
    font-weight: bold;
    line-height: 6px;
    text-align: center;
    flex: none;
    margin-right: 4px;
}

.root .exp {
    color: #666;
    margin-right: 3px;
}

.exp.none {
    height: 1px;
    border: 0;
    background: #d8dadc;
    margin-right: 4px;
    width: 9px;
    margin-left: 0;
}

.ico {
    width: 13px;
    height: 13px;
    margin-right: 4px;
    flex: none;
}

.root .ico {
    margin-right: 6px;
}

.title2 {
    gap: 5px;
}

.tree-ico {
    width: 9px;
    height: 9px;
}

.po {
    justify-content: center;
    padding-left: 0;
}

.po svg {
    width: 14px;
    height: 12px;
}

.rev {
    color: #5a9cc8;
}

.eye {
    border-left: 1px solid #c8cbce;
    padding-left: 8px;
    align-items: flex-start;
    padding-top: 6px;
}

.eye svg {
    width: 9px;
    height: 7px;
}

.menu {
    padding-left: 10px;
    color: #6f7478;
}

.menu svg {
    width: 9px;
    height: 5px;
}

.row.filler {
    flex: 1;
    height: auto;
    grid-template-columns: 27px 131px 253px 54px;
    background: #fff;
}

.row.filler .cell {
    border-right: 1px solid #c8cbce;
    padding: 0;
}

.row.filler .chk {
    background: #efefef;
}

.row.filler .cell:last-child {
    border: 0;
}

.grid-foot {
    height: 12px;
    flex: none;
    background: #f0f0f0;
}

.badge {
    position: absolute;
    width: 26px;
    height: 26px;
    border-radius: 50%;
    background: #fff;
    box-shadow: 0 0 4px rgba(0, 0, 0, .3);
    display: flex;
    align-items: center;
    justify-content: center;
}

.badge svg {
    width: 16px;
    height: 10px;
}

.b-left {
    left: 443px;
    top: 388px;
}

.b-right {
    right: 5px;
    top: 58px;
}

.info {
    position: absolute;
    left: 449px;
    top: 456px;
    width: 9px;
    height: 9px;
    border-radius: 50%;
    background: #222;
    color: #fff;
    font-size: 7px;
    font-weight: bold;
    text-align: center;
    line-height: 9px;
}

/* find dialog */
.find {
    position: absolute;
    left: 218px;
    top: 177px;
    width: 201px;
    height: 155px;
    background: #f7f7f7;
    border-radius: 2px;
    box-shadow: 0 1px 6px rgba(0, 0, 0, .3);
    z-index: 3;
}

.find-head {
    height: 16px;
    background: #fff;
    border-bottom: 1px solid #e3e4e5;
    display: flex;
    align-items: center;
    justify-content: space-between;
    padding: 0 5px;
    font-size: 8.6px;
    color: #3e4144;
}

.x {
    font-size: 12px;
    color: #6f7478;
    line-height: 12px;
}

.find-body {
    padding: 5px 7px 0 6px;
    display: flex;
    flex-direction: column;
}

.find-top {
    display: flex;
    align-items: center;
    height: 15px;
}

.find-input {
    width: 113px;
    height: 15px;
    background: #fff;
    border: 1px solid #c9cbcd;
    border-radius: 2px;
    margin-right: 3px;
}

.fbtn {
    width: 16px;
    height: 15px;
    background: #eeeeee;
    border: 1px solid #dcdddf;
    border-radius: 2px;
    display: flex;
    align-items: center;
    justify-content: center;
    margin-right: 3px;
}

.fbtn.small {
    margin-right: 1px;
}

.fbtn.last {
    margin-left: 3px;
    margin-right: 0;
}

.fbtn svg {
    width: 9px;
    height: 7px;
}

.fbtn.last svg {
    height: 9px;
}

.find-opts {
    height: 15px;
    margin-top: 4px;
    background: #efefef;
    display: flex;
    align-items: center;
    padding-left: 6px;
    font-weight: bold;
    color: #55585b;
}

.tri {
    width: 0;
    height: 0;
    border-left: 3px solid transparent;
    border-right: 3px solid transparent;
    border-top: 4px solid #333;
    margin-right: 5px;
}

.opt {
    display: flex;
    align-items: center;
    height: 16px;
    gap: 6px;
}

.find-in {
    margin-top: 1px;
    height: 12px;
    line-height: 11px;
}

.find-sel {
    height: 14px;
    width: 176px;
    background: #e9e9e9;
    border: 1px solid #d3d4d6;
    border-radius: 4px;
    display: flex;
    align-items: center;
    justify-content: space-between;
    padding-left: 4px;
    margin-bottom: 1px;
}

.find-sel .tri {
    border-left-width: 4px;
    border-right-width: 4px;
    border-top-width: 5px;
    margin-right: 3px;
}

/* action bars */
.actionbar {
    position: absolute;
    z-index: 4;
    display: flex;
    flex-direction: column;
    align-items: flex-start;
}

.ab-left {
    left: 69px;
    top: 434px;
}

.ab-right {
    left: 139px;
    top: 394px;
}

.ab-tabs {
    display: flex;
    height: 14px;
    margin-left: 27px;
    background: #e3e4e4;
    position: relative;
    font-size: 7.6px;
}

.ab-right .ab-tabs {
    margin-left: 25px;
}

.ab-tab {
    text-align: center;
    line-height: 14px;
    color: #6d7073;
    white-space: nowrap;
}

.ab-tab.on {
    background: #a6cae1;
}

.w-edit {
    width: 41px;
}

.w-view {
    width: 40px;
}

.w-tools {
    width: 40px;
}

.w-life {
    width: 42px;
}

.w-collab {
    width: 52px;
}

.w-conf {
    width: 58px;
}

.w-e2, .w-v2, .w-t2 {
    width: 41px;
}

.ab-more {
    position: absolute;
    right: -15px;
    top: 2px;
    width: 12px;
    height: 9px;
}

.ab-tools {
    display: flex;
    height: 32px;
    box-shadow: 0 0 2px rgba(0, 0, 0, .35);
}

.ab-right .ab-tools {
    height: 30px;
}

.ab-pin {
    display: flex;
    align-items: center;
    width: 79px;
    background: #fff;
}

.ab-rest {
    display: flex;
    align-items: center;
    width: 263px;
    background: #e6e6e6;
    padding-left: 1px;
    position: relative;
}

.ab-left .ab-rest::after {
    content: "";
    position: absolute;
    right: -2px;
    top: 24px;
    border-top: 2px solid transparent;
    border-bottom: 2px solid transparent;
    border-left: 3px solid #333;
}

.rest2 {
    width: 109px;
    padding-left: 0;
    gap: 1px;
}

.slot {
    height: 100%;
    display: flex;
    align-items: center;
    justify-content: center;
    position: relative;
}

.slot svg {
    width: 20px;
    height: 20px;
}

.w26 {
    width: 26px;
}

.w32 {
    width: 32px;
}

.slot.active {
    background: #cfe3f1;
    height: 24px;
    box-shadow: inset 0 0 0 1px #bcd7ea;
}

.drop {
    position: absolute;
    right: 0;
    top: 13px;
    width: 0;
    height: 0;
    border-left: 2px solid transparent;
    border-right: 2px solid transparent;
    border-top: 2px solid #333;
}

.ghost-nav {
    position: absolute;
    left: 3px;
    top: 465px;
    display: flex;
    gap: 5px;
    z-index: 5;
}

.ghost-nav span {
    width: 18px;
    height: 18px;
    border-radius: 50%;
    border: 1px solid rgba(140, 140, 140, .3);
}

/* 3d viewer */
.viewer {
    flex: 1;
    position: relative;
    min-height: 0;
}

.scene {
    width: 100%;
    height: 100%;
}

.chip-text {
    font-family: "Liberation Sans", Arial, sans-serif;
    font-size: 12px;
    font-weight: bold;
    fill: #111;
}

.axes {
    position: absolute;
    right: 21px;
    bottom: 22px;
    width: 80px;
    height: 70px;
}

.ax {
    font-size: 10px;
    fill: #6d7073;
    text-anchor: middle;
}

.status {
    height: 16px;
    flex: none;
    background: #efefef;
    display: flex;
    align-items: center;
    font-size: 8.8px;
    color: #333;
}

.st {
    height: 100%;
    display: flex;
    align-items: center;
    border-right: 1px solid #e0e0e0;
}

.st-sel {
    width: 31px;
    padding-left: 8px;
    gap: 1px;
}

.st-sel svg {
    width: 10px;
    height: 10px;
}

.st-load {
    width: 115px;
    padding-left: 7px;
    gap: 6px;
}

.st-load svg {
    width: 9px;
    height: 7px;
}

.pause {
    width: 6px;
    height: 8px;
    border: solid #333;
    border-width: 0 2px;
    margin-left: 2px;
}

.st-mid {
    width: 87px;
}

.st-end {
    width: 211px;
}

.st-bell {
    border: 0;
    flex: 1;
    justify-content: center;
}

.st-bell svg {
    width: 11px;
    height: 11px;
}
```
